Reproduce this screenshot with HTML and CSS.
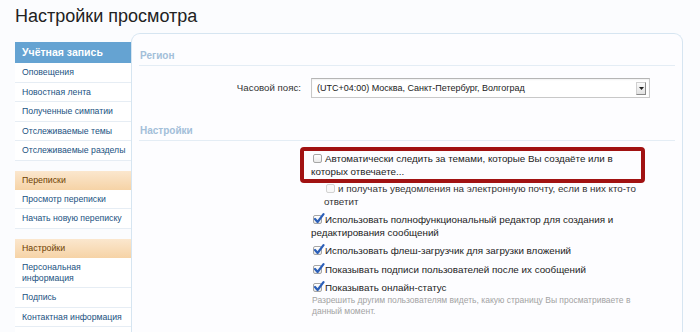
FILE: index.html
```html
<!DOCTYPE html>
<html lang="ru">
<head>
  <meta charset="UTF-8">
  <title>Настройки просмотра</title>
  <link rel="stylesheet" href="styles.css">
</head>
<body>
  <h1 class="page-title">Настройки просмотра</h1>

  <div class="layout">
    <nav class="sidebar">
      <div class="side-section">
        <h3 class="side-head primary">Учётная запись</h3>
        <ul class="side-links">
          <li><a href="#">Оповещения</a></li>
          <li><a href="#">Новостная лента</a></li>
          <li><a href="#">Полученные симпатии</a></li>
          <li><a href="#">Отслеживаемые темы</a></li>
          <li><a href="#">Отслеживаемые разделы</a></li>
        </ul>
      </div>
      <div class="side-section">
        <h3 class="side-head">Переписки</h3>
        <ul class="side-links">
          <li><a href="#">Просмотр переписки</a></li>
          <li><a href="#">Начать новую переписку</a></li>
        </ul>
      </div>
      <div class="side-section">
        <h3 class="side-head">Настройки</h3>
        <ul class="side-links">
          <li><a href="#">Персональная<br>информация</a></li>
          <li><a href="#">Подпись</a></li>
          <li><a href="#">Контактная информация</a></li>
          <li><a href="#">Конфиденциальность</a></li>
        </ul>
      </div>
    </nav>

    <main class="panel">
      <h2 class="section-title">Регион</h2>
      <div class="form-row">
        <label class="row-label">Часовой пояс:</label>
        <div class="row-control">
          <div class="select">
            <span class="select-text">(UTC+04:00) Москва, Санкт-Петербург, Волгоград</span>
            <span class="select-arrow"><svg width="5" height="3" viewBox="0 0 5 3"><path d="M0 0 H5 L2.5 3 Z" fill="#222"/></svg></span>
          </div>
        </div>
      </div>

      <h2 class="section-title">Настройки</h2>
      <div class="form-row">
        <div class="row-label"></div>
        <ul class="options">
          <li class="highlight">
            <div class="option"><span class="cb"></span>Автоматически следить за темами, которые Вы создаёте или в которых отвечаете...</div>
          </li>
          <li class="option sub"><span class="cb disabled"></span>и получать уведомления на электронную почту, если в них кто-то ответит</li>
          <li class="option"><span class="cb checked"><svg class="tick" width="12" height="11" viewBox="0 0 12 11"><path d="M2 6 L4.6 9 L10.5 1.2" fill="none" stroke="#2c5fb8" stroke-width="2.2" stroke-linecap="round" stroke-linejoin="round"/></svg></span>Использовать полнофункциональный редактор для создания и редактирования сообщений</li>
          <li class="option"><span class="cb checked"><svg class="tick" width="12" height="11" viewBox="0 0 12 11"><path d="M2 6 L4.6 9 L10.5 1.2" fill="none" stroke="#2c5fb8" stroke-width="2.2" stroke-linecap="round" stroke-linejoin="round"/></svg></span>Использовать флеш-загрузчик для загрузки вложений</li>
          <li class="option"><span class="cb checked"><svg class="tick" width="12" height="11" viewBox="0 0 12 11"><path d="M2 6 L4.6 9 L10.5 1.2" fill="none" stroke="#2c5fb8" stroke-width="2.2" stroke-linecap="round" stroke-linejoin="round"/></svg></span>Показывать подписи пользователей после их сообщений</li>
          <li class="option"><span class="cb checked"><svg class="tick" width="12" height="11" viewBox="0 0 12 11"><path d="M2 6 L4.6 9 L10.5 1.2" fill="none" stroke="#2c5fb8" stroke-width="2.2" stroke-linecap="round" stroke-linejoin="round"/></svg></span>Показывать онлайн-статус
            <p class="hint">Разрешить другим пользователям видеть, какую страницу Вы просматриваете в данный момент.</p>
          </li>
        </ul>
      </div>
    </main>
  </div>
</body>
</html>
```

FILE: styles.css
```css
body {
  font-family: "Liberation Sans", Arial, sans-serif;
  background-color: #fbfcfe;
  color: #333;
  margin: 0;
  padding: 0 17px 0 15px;
  overflow: hidden;
}
ul {
  list-style: none;
  margin: 0;
  padding: 0;
}
a {
  text-decoration: none;
}
.page-title {
  font-size: 18px;
  font-weight: normal;
  color: #222;
  line-height: 20px;
  margin: 6px 0 7px;
}
.layout {
  display: flex;
  align-items: flex-start;
}

/* sidebar */
.sidebar {
  width: 116px;
  flex-shrink: 0;
  margin-top: 9px;
}
.side-section {
  margin-bottom: 10px;
  background: #fff;
}
.side-head {
  margin: 0;
  font-size: 8.8px;
  font-weight: normal;
  line-height: 11px;
  padding: 4px 7px;
  color: #6d3f03;
  background: linear-gradient(to bottom, #fbe7ce, #f6d3a6);
}
.side-head.primary {
  font-size: 10.5px;
  font-weight: bold;
  line-height: 13px;
  color: #fff;
  background: #65a3d2;
}
.side-links li {
  border-bottom: 1px solid #e6edf4;
  padding: 4px 3px 3.5px 7px;
  line-height: 11px;
  font-size: 8.7px;
  white-space: nowrap;
}
.side-links a {
  color: #21527f;
}

/* content panel */
.panel {
  flex: 1;
  background: #fdfdff;
  border: 1px solid #d6e5f1;
  border-bottom: none;
  border-radius: 9px 9px 0 0;
  padding: 0 7px 40px 7px;
  min-height: 320px;
}
.section-title {
  margin: 15px 0 0;
  font-size: 10px;
  line-height: 14px;
  color: #a3bfd9;
  padding: 0 0 2px 1px;
  border-bottom: 1px solid #e4edf5;
}
.form-row {
  display: flex;
  gap: 10px;
  margin-top: 12px;
}
.section-title + .form-row + .section-title {
  margin-top: 26px;
}
.row-label {
  width: 162px;
  flex-shrink: 0;
  text-align: right;
  font-size: 9.7px;
  line-height: 20px;
  color: #333;
}
.row-control {
  flex: 1;
}
.select {
  width: 339px;
  height: 20px;
  box-sizing: border-box;
  border: 1px solid #c8c8c8;
  border-top-color: #b5b5b5;
  background: #fff;
  box-shadow: inset 0 1px 2px rgba(0, 0, 0, 0.06);
  display: flex;
  align-items: center;
  justify-content: space-between;
  padding: 0 3px 0 5px;
}
.select-text {
  font-size: 9px;
  color: #222;
}
.select-arrow {
  width: 10px;
  height: 13px;
  box-sizing: border-box;
  border: 1px solid #d0d0d0;
  border-right-color: #8a8a8a;
  border-bottom-color: #8a8a8a;
  background: linear-gradient(to bottom, #fafafa, #e2e2e2);
  display: flex;
  align-items: center;
  justify-content: center;
}

/* options */
.options {
  width: 329px;
  font-size: 9.8px;
  line-height: 12.5px;
  color: #222;
}
.option {
  margin-bottom: 6px;
}
.highlight {
  border: 4px solid #a11212;
  border-radius: 4px;
  padding: 2px 1px 1px 7px;
  margin: -6px -5px 0 -11px;
}
.highlight .option {
  margin-bottom: 0;
}
.option.sub {
  padding-left: 13px;
  color: #333;
}
.cb {
  display: inline-block;
  position: relative;
  width: 9px;
  height: 9px;
  box-sizing: border-box;
  margin: 0 3px 0 2px;
  vertical-align: -1px;
  border: 1px solid #a6a6a6;
  border-radius: 2px;
  background: linear-gradient(to bottom, #fff, #e9e9e9);
}
.cb.disabled {
  border-color: #d2d2d2;
  background: #f8f8f8;
}
.tick {
  position: absolute;
  left: -1px;
  top: -3px;
}
.hint {
  margin: 0;
  padding-left: 1px;
  font-size: 8.5px;
  line-height: 11.5px;
  color: #a3a3a3;
}
```
